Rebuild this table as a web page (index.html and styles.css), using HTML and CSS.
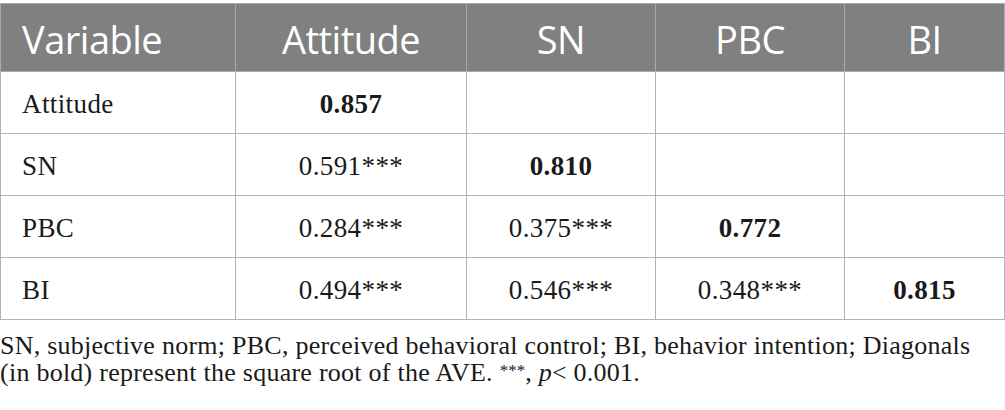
FILE: index.html
```html
<!DOCTYPE html>
<html>
<head>
<meta charset="utf-8">
<link rel="stylesheet" href="styles.css">
</head>
<body>
<div class="wrap">
<table class="corr">
<colgroup>
<col class="c1"><col class="c2"><col class="c3"><col class="c4"><col class="c5">
</colgroup>
<thead>
<tr><th class="first">Variable</th><th>Attitude</th><th>SN</th><th>PBC</th><th>BI</th></tr>
</thead>
<tbody>
<tr><td class="first">Attitude</td><td><b>0.857</b></td><td></td><td></td><td></td></tr>
<tr><td class="first">SN</td><td>0.591***</td><td><b>0.810</b></td><td></td><td></td></tr>
<tr><td class="first">PBC</td><td>0.284***</td><td>0.375***</td><td><b>0.772</b></td><td></td></tr>
<tr><td class="first">BI</td><td>0.494***</td><td>0.546***</td><td>0.348***</td><td><b>0.815</b></td></tr>
</tbody>
</table>
<p class="note">SN, subjective norm; PBC, perceived behavioral control; BI, behavior intention; Diagonals (in bold) represent the square root of the AVE. <sup class="stars">***</sup>, <i>p</i>&lt; 0.001.</p>
</div>
</body>
</html>
```
FILE: styles.css
```css
html, body {
  margin: 0;
  padding: 0;
  background: #ffffff;
}
.wrap {
  padding-top: 3px;
  width: 1005px;
}
.corr {
  border-collapse: collapse;
  width: 1004px;
  table-layout: fixed;
  font-family: "Liberation Serif", "Times New Roman", serif;
  color: #1a1a1a;
}
.c1 { width: 235px; }
.c2 { width: 231px; }
.c3 { width: 189px; }
.c4 { width: 189px; }
.c5 { width: 160px; }
.corr th, .corr td {
  border: 1px solid #b3b3b3;
  text-align: center;
  padding: 0;
}
.corr th {
  background: #808080;
  color: #ffffff;
  font-family: "Open Sans", "Noto Sans", sans-serif;
  font-weight: 400;
  font-size: 38px;
  letter-spacing: -0.5px;
  height: 65px;
  padding-top: 2px;
  border-color: #a9a9a9;
}
.corr td {
  height: 57px;
  padding-top: 4px;
  font-size: 27px;
  letter-spacing: 0.4px;
}
.corr .first {
  text-align: left;
  padding-left: 21px;
}
.corr b { font-weight: bold; }
.note {
  margin: 12px 0 0 0;
  font-family: "Liberation Serif", "Times New Roman", serif;
  font-size: 26px;
  letter-spacing: 0.25px;
  line-height: 27px;
  color: #1a1a1a;
}
.stars {
  font-size: 17px;
  line-height: 0;
  vertical-align: 5px;
  letter-spacing: 0;
}
```
